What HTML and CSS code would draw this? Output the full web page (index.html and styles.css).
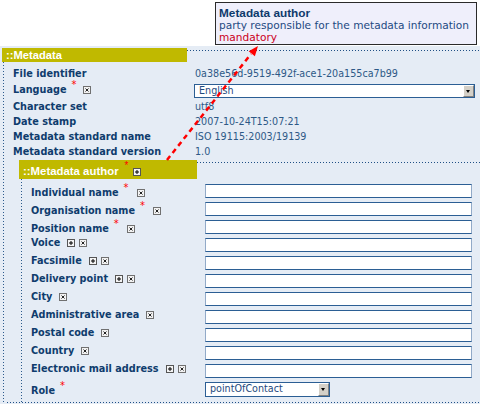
FILE: index.html
```html
<!DOCTYPE html>
<html>
<head>
<meta charset="utf-8">
<link rel="stylesheet" href="styles.css">
</head>
<body>
<svg class="defs" width="0" height="0" aria-hidden="true">
  <symbol id="ix" viewBox="0 0 8 8"><rect x=".5" y=".5" width="7" height="7" fill="#f2f2f2" stroke="#707070"/><path d="M2.5 2.5l3 3M5.5 2.5l-3 3" stroke="#222" stroke-width="1"/></symbol>
  <symbol id="ip" viewBox="0 0 8 8"><rect x=".5" y=".5" width="7" height="7" fill="#f4f4f4" stroke="#555"/><path d="M2 4h4M4 2v4" stroke="#000" stroke-width="1"/></symbol>
</svg>

<div class="top">
  <div class="tip">
    <div class="tip-title">Metadata author</div>
    <div class="tip-text">party responsible for the metadata information</div>
    <div class="tip-req">mandatory</div>
  </div>
</div>

<div class="main">
  <div class="sec-head">
    <div class="sec-title">::Metadata</div>
    <div class="sec-line"></div>
  </div>
  <div class="sec-body">
    <div class="orow"><div class="olab">File identifier</div><div class="oval">0a38e56d-9519-492f-ace1-20a155ca7b99</div></div>
    <div class="orow lang"><div class="olab">Language<span class="req">*</span><svg class="ic ic-first"><use href="#ix"/></svg></div>
      <div class="oval"><div class="sel sel-wide"><span class="sel-txt">English</span><span class="sel-btn"></span></div></div></div>
    <div class="orow"><div class="olab">Character set</div><div class="oval">utf8</div></div>
    <div class="orow"><div class="olab">Date stamp</div><div class="oval">2007-10-24T15:07:21</div></div>
    <div class="orow"><div class="olab">Metadata standard name</div><div class="oval">ISO 19115:2003/19139</div></div>
    <div class="orow"><div class="olab">Metadata standard version</div><div class="oval">1.0</div></div>

    <div class="sub">
      <div class="sec-head">
        <div class="sub-title">::Metadata author<span class="req hreq">*</span><svg class="ic hic"><use href="#ip"/></svg></div>
        <div class="sec-line"></div>
      </div>
      <div class="sub-body">
        <div class="irow"><div class="ilab low">Individual name<span class="req">*</span><svg class="ic ic-after"><use href="#ix"/></svg></div><input class="inp" type="text"></div>
        <div class="irow"><div class="ilab low">Organisation name<span class="req">*</span><svg class="ic ic-after"><use href="#ix"/></svg></div><input class="inp" type="text"></div>
        <div class="irow"><div class="ilab low">Position name<span class="req">*</span><svg class="ic ic-after"><use href="#ix"/></svg></div><input class="inp" type="text"></div>
        <div class="irow"><div class="ilab">Voice<svg class="ic ic-first"><use href="#ip"/></svg><svg class="ic ic-next"><use href="#ix"/></svg></div><input class="inp" type="text"></div>
        <div class="irow"><div class="ilab">Facsimile<svg class="ic ic-first"><use href="#ip"/></svg><svg class="ic ic-next"><use href="#ix"/></svg></div><input class="inp" type="text"></div>
        <div class="irow"><div class="ilab">Delivery point<svg class="ic ic-first"><use href="#ip"/></svg><svg class="ic ic-next"><use href="#ix"/></svg></div><input class="inp" type="text"></div>
        <div class="irow"><div class="ilab">City<svg class="ic ic-first"><use href="#ix"/></svg></div><input class="inp" type="text"></div>
        <div class="irow"><div class="ilab">Administrative area<svg class="ic ic-first"><use href="#ix"/></svg></div><input class="inp" type="text"></div>
        <div class="irow"><div class="ilab">Postal code<svg class="ic ic-first"><use href="#ix"/></svg></div><input class="inp" type="text"></div>
        <div class="irow"><div class="ilab">Country<svg class="ic ic-first"><use href="#ix"/></svg></div><input class="inp" type="text"></div>
        <div class="irow"><div class="ilab">Electronic mail address<svg class="ic ic-first"><use href="#ip"/></svg><svg class="ic ic-next"><use href="#ix"/></svg></div><input class="inp" type="text"></div>
        <div class="irow role"><div class="ilab low">Role<span class="req">*</span></div><div class="sel sel-role"><span class="sel-txt">pointOfContact</span><span class="sel-btn"></span></div></div>
      </div>
    </div>
    <div class="bottom-line"></div>
  </div>
</div>

<svg class="arrow" width="480" height="404" viewBox="0 0 480 404" aria-hidden="true">
  <line x1="167" y1="160" x2="251" y2="54" stroke="#f00" stroke-width="2.5" stroke-dasharray="5 4"/>
  <polygon points="258,46 248.7,51.3 254.9,56.3" fill="#f00"/>
</svg>
</body>
</html>
```
FILE: styles.css
```css
html, body {
  margin: 0;
  padding: 0;
}
body {
  background: #e5ecf5;
  font-family: "DejaVu Sans", Verdana, sans-serif;
  position: relative;
  width: 480px;
  height: 404px;
  overflow: hidden;
}
.defs {
  position: absolute;
}
.top {
  height: 46px;
  background: #fff;
  position: relative;
}
.tip {
  position: absolute;
  left: 215px;
  top: 2px;
  width: 254px;
  height: 36px;
  padding: 4px 3px 1px 3px;
  border: 1px solid #2a2a2a;
  background: #efeffb;
  font-size: 10.6px;
  line-height: 12px;
}
.tip-title {
  font-family: "Liberation Sans", Arial, sans-serif;
  font-weight: bold;
  font-size: 11.8px;
  color: #0e3a6b;
}
.tip-text {
  color: #1e4a82;
}
.tip-req {
  color: #cc0022;
}
.main {
  padding-top: 2px;
}
.sec-head {
  display: flex;
}
.sec-title {
  margin-left: 2px;
  width: 181px;
  height: 14px;
  padding-left: 4px;
  background: #c0b900;
  color: #fff;
  font-family: "Liberation Sans", Arial, sans-serif;
  font-weight: bold;
  font-size: 11.2px;
  line-height: 14px;
}
.sec-line {
  flex: 1;
  height: 1px;
  margin-top: 2px;
  background: repeating-linear-gradient(to right, #1f4f85 0 1px, transparent 1px 3px);
}
.sec-body {
  margin-left: 3px;
  padding: 4px 0 0 10px;
  background: repeating-linear-gradient(to bottom, #2b5a8c 0 1px, transparent 1px 3px) left top / 1px 100% no-repeat;
  height: 354px;
}
.orow {
  display: flex;
  height: 15px;
  line-height: 15px;
  font-size: 9.6px;
}
.orow.lang {
  height: 18px;
  line-height: 18px;
}
.olab {
  width: 182px;
  font-weight: bold;
  color: #0f3c6d;
  font-size: 9.7px;
}
.oval {
  color: #2d5986;
}
.lang .oval {
  padding-top: 3px;
}
.req {
  color: #ff0000;
  font-weight: normal;
  font-size: 10px;
  line-height: 0;
  vertical-align: 5px;
  margin-left: 5px;
}
.ic {
  width: 8px;
  height: 8px;
  display: inline-block;
  vertical-align: -1px;
}
.ic-first {
  margin-left: 7px;
}
.ic-next {
  margin-left: 4px;
}
.ic-after {
  margin-left: 8px;
}
.sel {
  display: flex;
  box-sizing: border-box;
  height: 14px;
  border: 1px solid #2b5e94;
  background: #fff;
}
.sel-wide {
  width: 281px;
  margin-left: -1px;
}
.sel-role {
  width: 125px;
  height: 15px;
}
.sel-txt {
  flex: 1;
  padding-left: 4px;
  font-size: 9.6px;
  line-height: 12px;
  color: #1f4a7e;
  font-weight: normal;
}
.sel-btn {
  width: 11px;
  box-sizing: border-box;
  background: #d4d0c8;
  border-top: 1px solid #fff;
  border-left: 1px solid #fff;
  border-right: 1px solid #808080;
  border-bottom: 1px solid #808080;
  position: relative;
}
.sel-btn::after {
  content: "";
  position: absolute;
  left: 2px;
  top: 4px;
  border-left: 2.5px solid transparent;
  border-right: 2.5px solid transparent;
  border-top: 3px solid #000;
}
.sub {
  margin: 1px 0 0 6px;
}
.sub-title {
  width: 174px;
  height: 15px;
  padding: 4px 0 0 4px;
  background: #c0b900;
  color: #fff;
  font-family: "Liberation Sans", Arial, sans-serif;
  font-weight: bold;
  font-size: 11.4px;
  line-height: 15px;
}
.hreq {
  margin-left: 6px;
  vertical-align: 6px;
}
.hic {
  margin-left: 5px;
  vertical-align: -1px;
}
.sub-body {
  margin-left: 2px;
  padding: 5px 0 5px 10px;
  background: repeating-linear-gradient(to bottom, #2b5a8c 0 1px, transparent 1px 3px) left top / 1px 100% no-repeat;
}
.irow {
  display: flex;
  align-items: flex-start;
  height: 14px;
  margin-bottom: 4px;
}
.irow.role {
  height: 15px;
  margin-bottom: 0;
}
.ilab {
  width: 174px;
  font-weight: bold;
  color: #0f3c6d;
  font-size: 9.7px;
  line-height: 10px;
  white-space: nowrap;
}
.ilab.low {
  padding-top: 4px;
}
.inp {
  width: 267px;
  height: 14px;
  box-sizing: border-box;
  margin: 0;
  padding: 0;
  border: 1px solid;
  border-color: #2b5e94 #92aac8 #2b5e94 #92aac8;
  background: #fff;
  outline: none;
}
.bottom-line {
  margin-left: -6px;
  height: 1px;
  background: repeating-linear-gradient(to right, #1f4f85 0 1px, transparent 1px 3px);
}
.arrow {
  position: absolute;
  left: 0;
  top: 0;
  pointer-events: none;
}
```
